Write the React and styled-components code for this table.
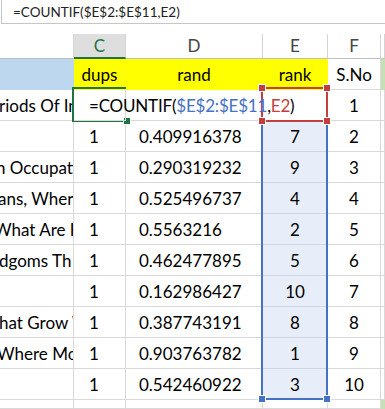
import styled, { createGlobalStyle } from "styled-components";

const GlobalStyle = createGlobalStyle`
  * { box-sizing: border-box; }
  body {
    margin: 0;
    background: #fff;
    font-family: Lato, "Liberation Sans", sans-serif;
  }
`;

const COLUMNS = "74px 52px 137px 65px 53px 1fr";
const ROWS = "25px repeat(11, 31px) 1fr";
const GRID = "#d9d9d9";
const BLUE = "#4472c4";
const RED = "#c43e3e";
const GREEN = "#217346";

const Window = styled.div`
  width: 385px;
  height: 409px;
  overflow: hidden;
  background: #fff;
`;

const FormulaBar = styled.div`
  height: 24px;
  margin-left: 1px;
  padding: 4px 0 0 11px;
  border-left: 1px solid #c6c6c6;
  border-bottom: 1px solid #c6c6c6;
  font-size: 13.5px;
  line-height: 17px;
  color: #222;
  white-space: nowrap;
`;

// sheet cells and the selection layer share one grid area
const Stack = styled.div`
  display: grid;
  height: 375px;
  margin-top: 10px;
  & > * {
    grid-area: 1 / 1;
  }
`;

const Grid = styled.div`
  display: grid;
  grid-template-columns: ${COLUMNS};
  grid-template-rows: ${ROWS};
  pointer-events: ${(p) => (p.$overlay ? "none" : "auto")};
`;

const HeadCell = styled.div`
  display: flex;
  align-items: flex-end;
  justify-content: center;
  padding-bottom: ${(p) => (p.$active ? 1 : 2)}px;
  font-size: 17px;
  line-height: 20px;
  color: ${(p) => (p.$active ? GREEN : "#444")};
  background: ${(p) => (p.$active ? "#dedede" : "#fff")};
  border-right: 1px solid #d4d4d4;
  border-bottom: ${(p) => (p.$active ? `2px solid ${GREEN}` : "1px solid #bfbfbf")};
`;

const Cell = styled.div`
  display: flex;
  align-items: flex-end;
  justify-content: ${(p) => (p.$center ? "center" : "flex-start")};
  padding: 0 0 4px ${(p) => p.$indent || 0}px;
  font-size: 17px;
  line-height: 20px;
  color: #000;
  white-space: nowrap;
  overflow: ${(p) => (p.$spill ? "visible" : "hidden")};
  position: ${(p) => (p.$spill ? "relative" : "static")};
  z-index: ${(p) => (p.$spill ? 1 : "auto")};
  letter-spacing: ${(p) => (p.$spill ? "-0.2px" : "normal")};
  background: ${(p) => p.$fill || (p.$shade ? "#e7eef9" : "transparent")};
  border-right: 1px solid ${(p) => p.$fill || (p.$shade ? "#cfd6e2" : GRID)};
  border-bottom: 1px solid ${(p) => p.$fill || (p.$shade ? "#cfd6e2" : GRID)};
`;

const Clipped = styled.span`
  margin-left: ${(p) => p.$shift}px;
`;

const Ref = styled.span`
  color: ${(p) => p.$color};
`;

const Caret = styled.span`
  display: inline-block;
  width: 1px;
  height: 18px;
  margin: 0 0 -2px 3px;
  background: #000;
`;

const Box = styled.div`
  grid-column: ${(p) => p.$col};
  grid-row: ${(p) => p.$rows};
  margin: ${(p) => p.$margin};
  position: relative;
  border: 2px solid ${(p) => p.$color};
  border-top-width: ${(p) => (p.$noTop ? 0 : 2)}px;
  border-right-width: ${(p) => (p.$noRight ? 0 : 2)}px;
`;

const Handle = styled.span`
  position: absolute;
  width: 6px;
  height: 6px;
  background: ${(p) => p.$color};
  outline: 1px solid #fff;
  ${(p) => (p.$top ? "top: -4px;" : "bottom: -4px;")}
  ${(p) => (p.$left ? "left: -4px;" : "right: -4px;")}
`;

const headers = ["", "C", "D", "E", "F", ""];

// rows 3..11 of the sheet; b is the part of column B that is in view
const rows = [
  { b: "", shift: 0, d: "0.409916378", e: 7, f: 2 },
  { b: "n Occupations", shift: -4, d: "0.290319232", e: 9, f: 3 },
  { b: "ans, Where", shift: -2, d: "0.525496737", e: 4, f: 4 },
  { b: "What Are H", shift: -6, d: "0.5563216", e: 2, f: 5 },
  { b: "dgoms Th", shift: -1, d: "0.462477895", e: 5, f: 6 },
  { b: "", shift: 0, d: "0.162986427", e: 10, f: 7 },
  { b: "hat Grow W", shift: -1, d: "0.387743191", e: 8, f: 8 },
  { b: "Where Mou", shift: -3, d: "0.903763782", e: 1, f: 9 },
  { b: "", shift: 0, d: "0.542460922", e: 3, f: 10 },
];

const Formula = () => (
  <>
    =COUNTIF(<Ref $color={BLUE}>$E$2:$E$11</Ref>,<Ref $color={RED}>E2</Ref>)
  </>
);

const App = () => {
  return (
    <Window>
      <GlobalStyle />
      <FormulaBar>=COUNTIF($E$2:$E$11,E2)</FormulaBar>
      <Stack>
        <Grid>
          {headers.map((h, i) => (
            <HeadCell key={i} $active={h === "C"}>
              {h}
            </HeadCell>
          ))}

          <Cell $fill="#bdd7ee" />
          <Cell $fill="#ffff00" $center>dups</Cell>
          <Cell $fill="#ffff00" $center>rand</Cell>
          <Cell $fill="#ffff00" $center>rank</Cell>
          <Cell $center>S.No</Cell>
          <Cell $fill="#c6e0b4" />

          <Cell>
            <Clipped $shift={-1}>riods Of Increase</Clipped>
          </Cell>
          <Cell $indent={15} $spill>
            <Formula />
            <Caret />
          </Cell>
          <Cell />
          <Cell />
          <Cell $center>1</Cell>
          <Cell />

          {rows.map((r, i) => [
            <Cell key={`b${i}`}>
              {r.b && <Clipped $shift={r.shift}>{r.b}</Clipped>}
            </Cell>,
            <Cell key={`c${i}`} $indent={15}>1</Cell>,
            <Cell key={`d${i}`} $indent={13}>{r.d}</Cell>,
            <Cell key={`e${i}`} $center $shade>{r.e}</Cell>,
            <Cell key={`f${i}`} $center>{r.f}</Cell>,
            <Cell key={`g${i}`} />,
          ])}

          <Cell />
          <Cell />
          <Cell />
          <Cell />
          <Cell />
          <Cell $fill="#c6e0b4" />
        </Grid>

        <Grid $overlay>
          <Box $col={2} $rows="3" $margin="-3px 0 -1px -2px" $color={GREEN} $noRight>
            <Handle $color={GREEN} />
          </Box>
          <Box $col={4} $rows="4 / 13" $margin="0 0 0 -2px" $color={BLUE} $noTop>
            <Handle $color={BLUE} $left />
            <Handle $color={BLUE} />
          </Box>
          <Box $col={4} $rows="3" $margin="-3px 0 -1px -2px" $color={RED}>
            <Handle $color={RED} $top $left />
            <Handle $color={RED} $top />
            <Handle $color={RED} $left />
            <Handle $color={RED} />
          </Box>
        </Grid>
      </Stack>
    </Window>
  );
};

export default App;
